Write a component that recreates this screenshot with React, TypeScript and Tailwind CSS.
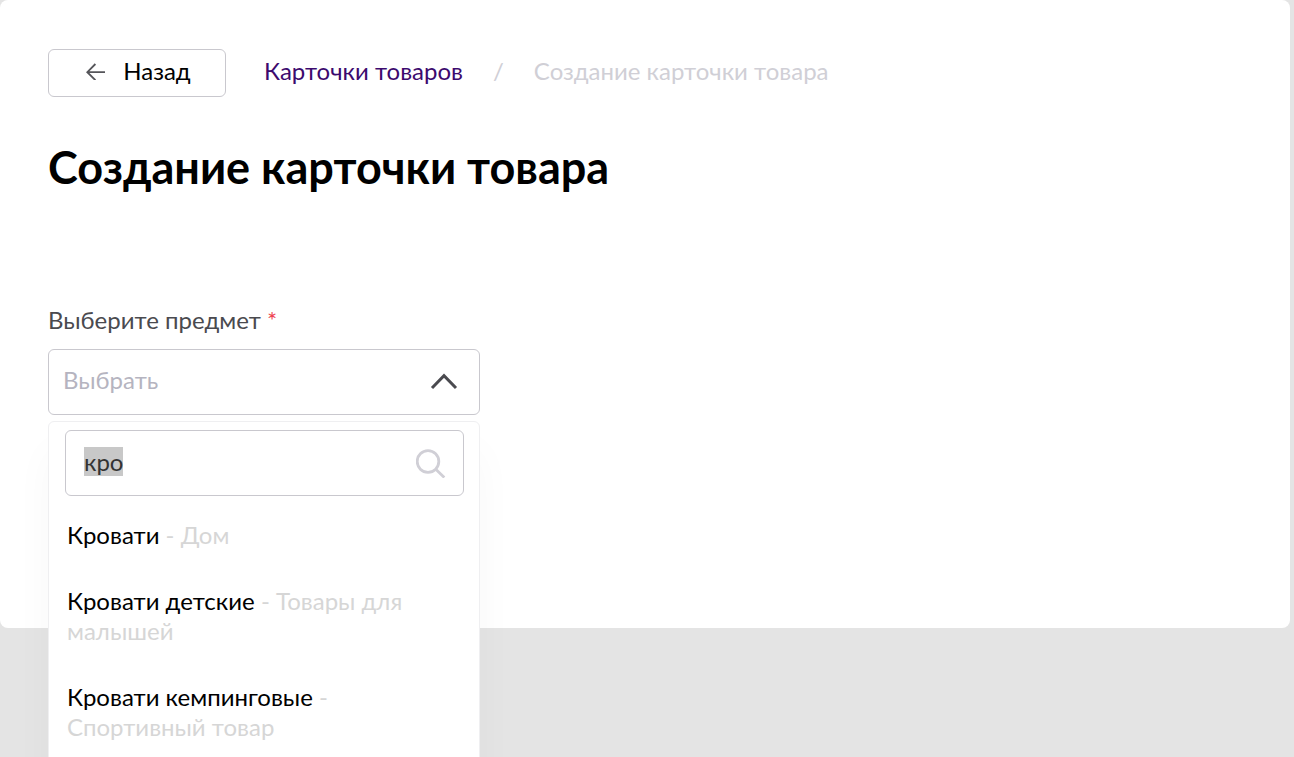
/**
 * Product card creation page
 * Subject picker with a searchable dropdown
 */

import React, { useEffect, useRef, useState } from 'react';

interface Subject {
  name: string;
  category: string;
}

const SUBJECTS: Subject[] = [
  { name: 'Кровати', category: 'Дом' },
  { name: 'Кровати детские', category: 'Товары для малышей' },
  { name: 'Кровати кемпинговые', category: 'Спортивный товар' },
];

const ArrowLeft: React.FC = () => (
  <svg width="20" height="18" viewBox="0 0 20 18" fill="none" stroke="#55555a" strokeWidth="1.8" aria-hidden="true">
    <path d="M20 10.2H2.5M10.4 2L2.3 10.2l8.1 8" />
  </svg>
);

const ChevronUp: React.FC = () => (
  <svg
    className="pointer-events-none absolute right-5 top-6"
    width="30"
    height="18"
    viewBox="0 0 30 18"
    fill="none"
    stroke="#4a4a4f"
    strokeWidth="3"
    aria-hidden="true"
  >
    <path d="M2 15L14 2.7 26 15" />
  </svg>
);

const SearchIcon: React.FC = () => (
  <svg
    className="pointer-events-none absolute right-4 top-4"
    width="32"
    height="32"
    viewBox="0 0 32 32"
    fill="none"
    stroke="#d0cfd6"
    strokeWidth="2.8"
    aria-hidden="true"
  >
    <circle cx="12" cy="15.5" r="10.8" />
    <path d="M19.5 23l8.8 8.5" />
  </svg>
);

const Breadcrumbs: React.FC = () => (
  <nav className="flex flex-wrap items-center pb-1 text-[#d0cfd6]">
    <a href="#cards" className="text-[#3c0a6e]">
      Карточки товаров
    </a>
    <span className="mx-[30px]">/</span>
    <span>Создание карточки товара</span>
  </nav>
);

const SubjectSelect: React.FC = () => {
  const searchRef = useRef<HTMLInputElement>(null);
  const [query, setQuery] = useState('кро');
  const [selected, setSelected] = useState('');

  // Focus the search box with its text selected
  useEffect(() => {
    searchRef.current?.focus({ preventScroll: true });
    searchRef.current?.select();
  }, []);

  const found = SUBJECTS.filter((s) => s.name.toLowerCase().includes(query.toLowerCase()));

  return (
    <div className="w-full max-w-[432px]">
      <label htmlFor="subject" className="mb-[14px] block text-[#4a4a4f]">
        Выберите предмет <span className="text-[#ee4451]">*</span>
      </label>

      <div className="relative">
        <select
          id="subject"
          value={selected}
          onChange={(e) => setSelected(e.target.value)}
          className="block h-[66px] w-full appearance-none rounded-md border border-[#c9c8ce] bg-white px-[14px] pb-1 text-[#b5b4c0] outline-none"
        >
          <option value="">Выбрать</option>
          {SUBJECTS.map((s) => (
            <option key={s.name} value={s.name}>
              {s.name}
            </option>
          ))}
        </select>
        <ChevronUp />

        {/* Dropdown */}
        <div className="absolute inset-x-0 top-full mt-[6px] rounded-md border border-[#efeff1] bg-white pb-4 pt-2 shadow-[0_30px_40px_rgba(0,0,0,0.03)]">
          <div className="relative mb-2 ml-4 mr-[15px]">
            <input
              ref={searchRef}
              type="text"
              aria-label="Поиск"
              value={query}
              onChange={(e) => setQuery(e.target.value)}
              className="block h-[66px] w-full rounded-md border border-[#c9c8ce] bg-white pb-1 pl-[18px] pr-14 text-[#2b2b2b] outline-none selection:bg-[#c8c8c8] selection:text-[#333333]"
            />
            <SearchIcon />
          </div>

          <ul>
            {found.map((s) => (
              <li key={s.name}>
                <button
                  type="button"
                  onClick={() => setSelected(s.name)}
                  className="block w-full pb-5 pl-[18px] pr-14 pt-4 text-left"
                >
                  {s.name} <span className="text-[#d6d6d6]">- {s.category}</span>
                </button>
              </li>
            ))}
          </ul>
        </div>
      </div>
    </div>
  );
};

const App: React.FC = () => {
  return (
    <div className="h-screen overflow-hidden bg-[#e4e4e4] pr-1 font-['Lato',sans-serif] text-2xl leading-[30px] text-black">
      <main className="rounded-lg bg-white px-12 pb-[213px] pt-[49px]">
        <div className="flex flex-wrap items-center gap-x-[38px] gap-y-4">
          <button
            type="button"
            className="flex h-12 w-[178px] items-center justify-center gap-[18px] rounded-md border border-[#c9c8ce] bg-white pb-1 pl-0.5"
          >
            <ArrowLeft />
            Назад
          </button>
          <Breadcrumbs />
        </div>

        <h1 className="mb-[110px] mt-[42px] text-[45px] font-bold leading-[56px]">Создание карточки товара</h1>

        <SubjectSelect />
      </main>
    </div>
  );
};

export default App;
